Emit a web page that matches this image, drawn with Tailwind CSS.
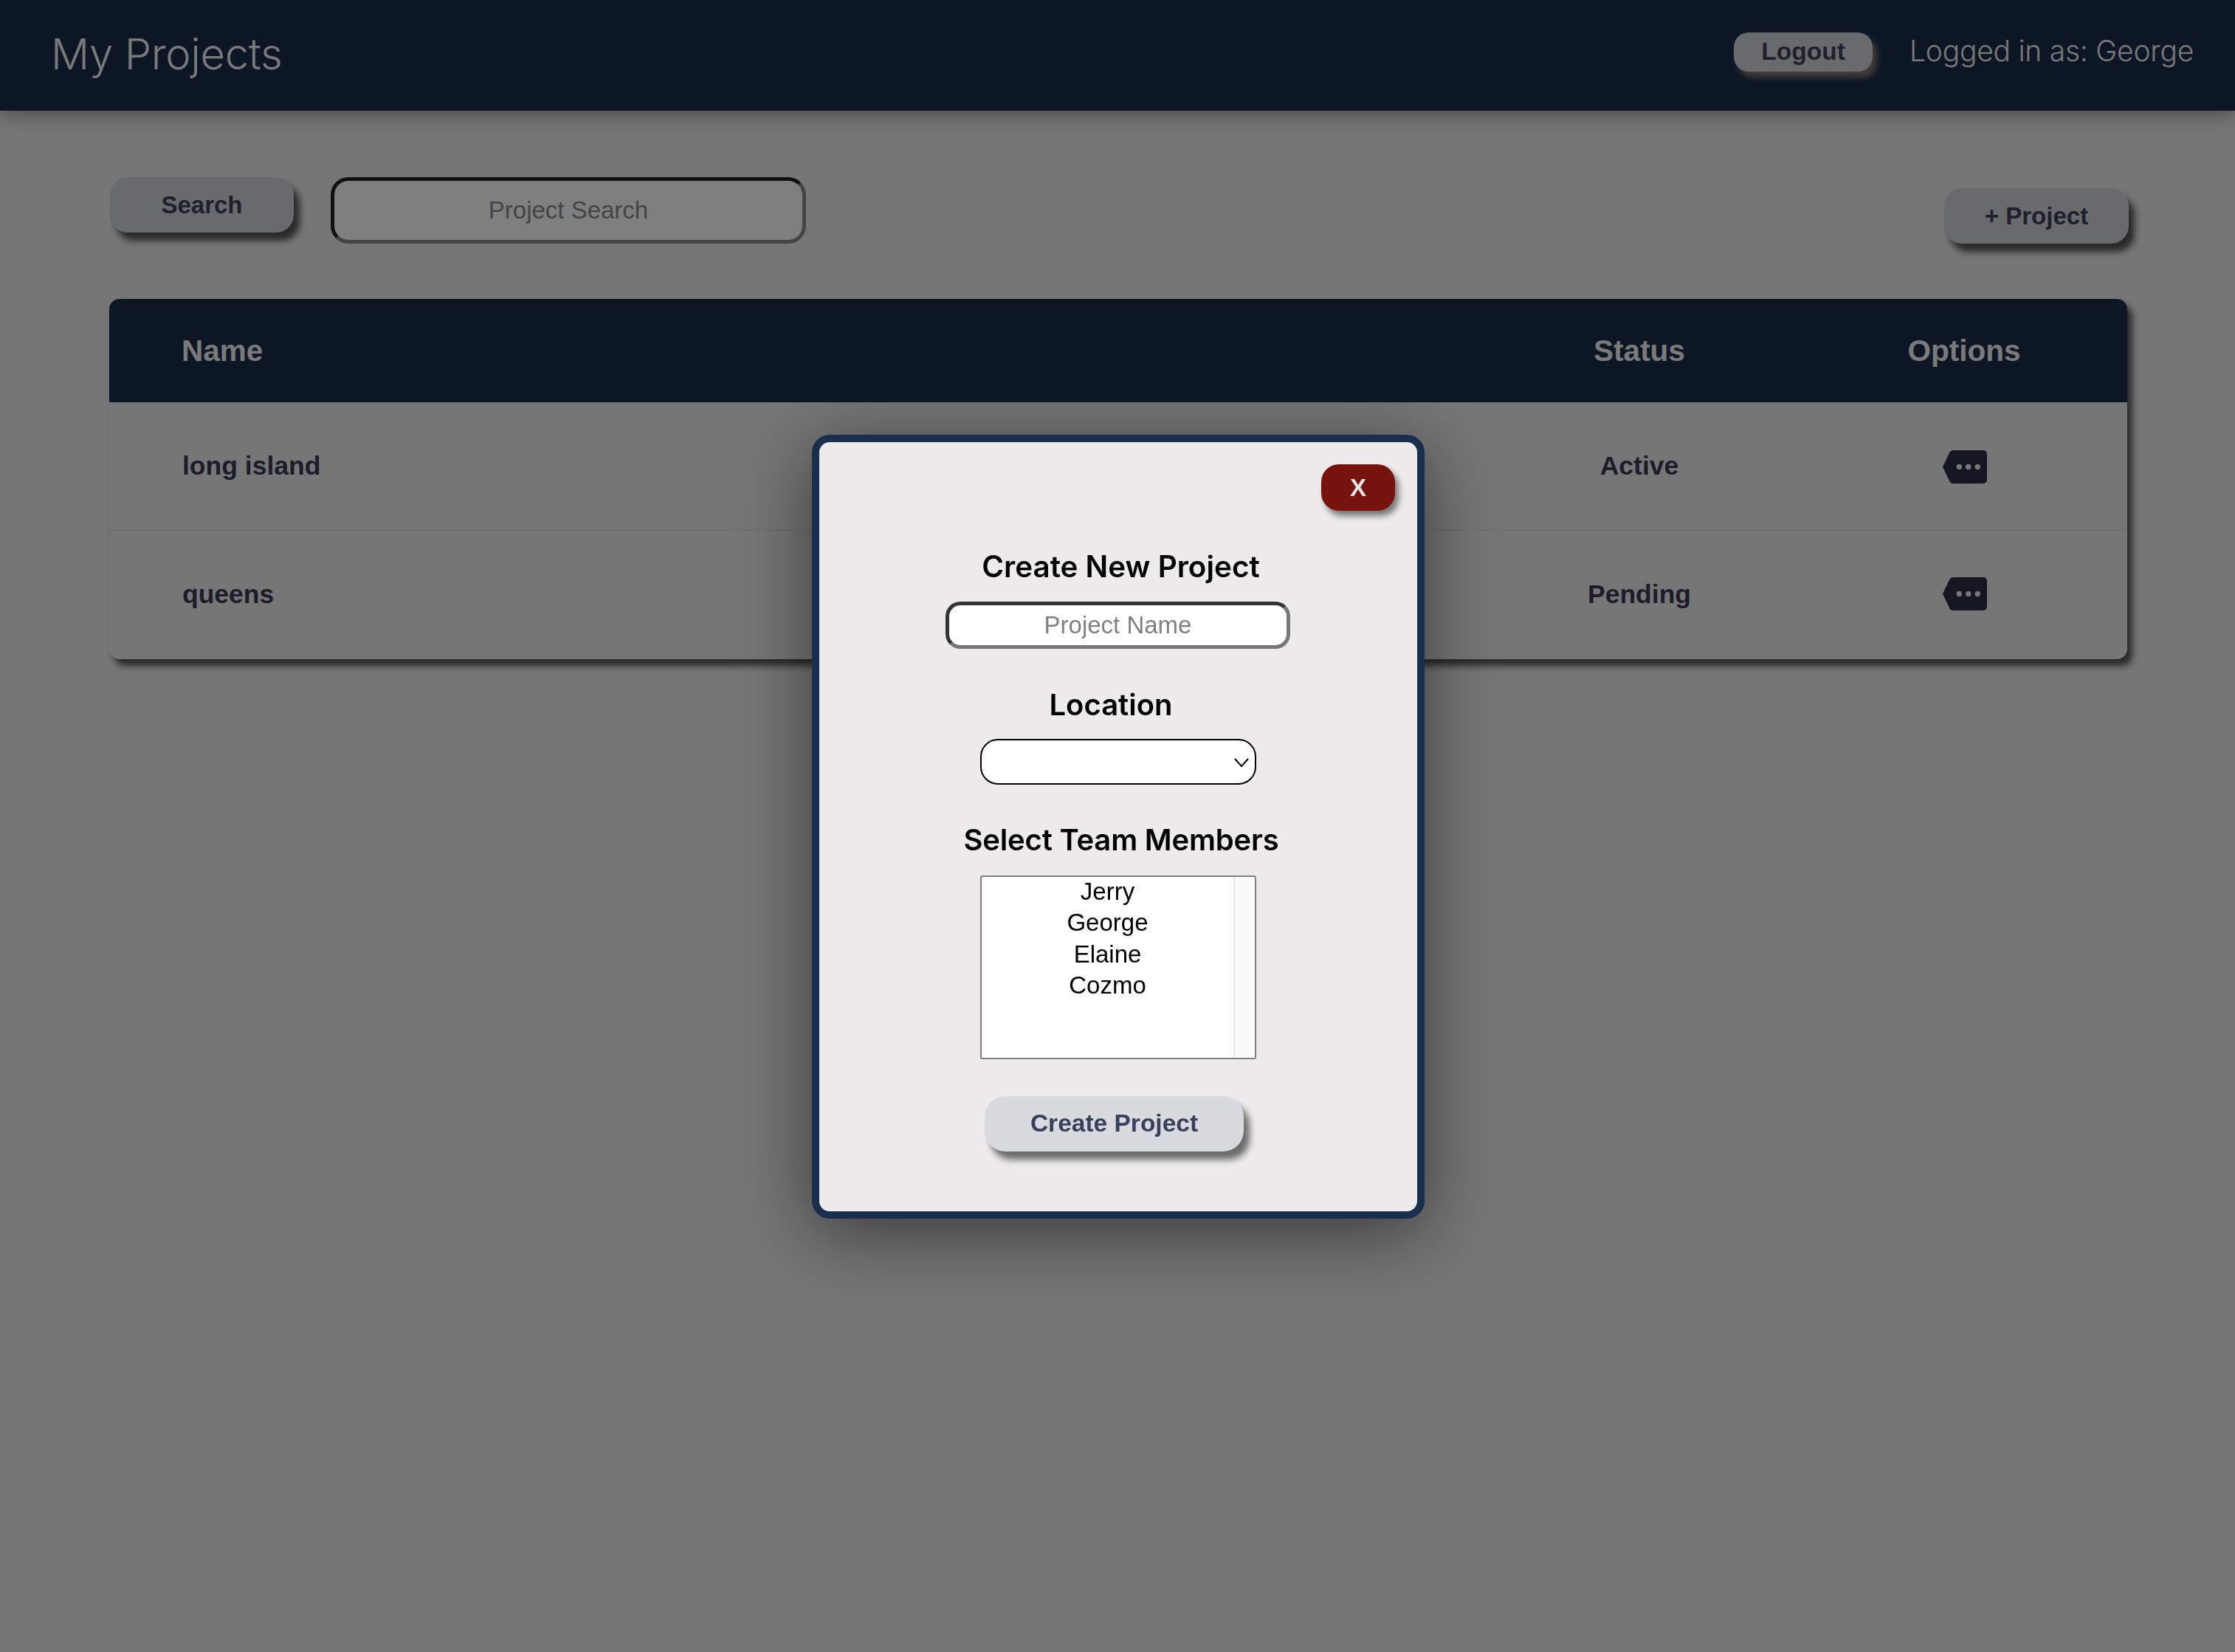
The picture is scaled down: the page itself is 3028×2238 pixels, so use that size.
<!DOCTYPE html>
<html lang="en">

<head>
    <meta charset="UTF-8">
    <meta name="viewport" content="width=device-width, initial-scale=1.0">
    <title>My Projects</title>
    <script src="https://cdn.jsdelivr.net/npm/@tailwindcss/browser@4"></script>
</head>

<body class="bg-[#ececec] min-h-screen font-['Liberation_Sans',Arial,sans-serif]">

    <header class="relative h-[150px] bg-[#182d4b] flex items-center justify-between pl-[69px] pr-[56px] shadow-[0_6px_24px_rgba(0,0,0,0.35)] font-['Inter',sans-serif] text-[#f2f2f2]">
        <h1 class="text-[58px] font-light tracking-[-0.4px] -mt-[4px]">My Projects</h1>
        <div class="flex items-center gap-[50px]">
            <button class="w-[188px] h-[53px] rounded-[20px] bg-[#d1d5dd] text-[#3e3e5a] text-[33.5px] font-bold font-['Liberation_Sans',sans-serif] shadow-[6px_8px_8px_rgba(160,140,120,0.8)] -mt-[9px]">Logout</button>
            <span class="text-[39px] font-light tracking-[-0.25px] -mt-[12px]">Logged in as: George</span>
        </div>
    </header>

    <main class="pt-[90px]">
        <!-- search + add -->
        <div class="flex justify-between pl-[149px] pr-[144px]">
            <div class="flex items-start gap-[50px]">
                <button class="w-[249px] h-[75px] rounded-[24px] bg-[#d1d5dd] text-[#3e3e5a] text-[33px] font-bold shadow-[8px_11px_10px_rgba(0,0,0,0.65)]">Search</button>
                <input type="text" placeholder="Project Search"
                    class="w-[644px] h-[90px] rounded-[24px] bg-white text-center text-[33px] border-[5px] border-t-[#222222] border-l-[#222222] border-b-[#888888] border-r-[#888888] placeholder:text-[#888888]">
            </div>
            <button class="self-end w-[250px] h-[75px] rounded-[24px] bg-[#d1d5dd] text-[#3e3e5a] text-[33px] font-bold shadow-[8px_11px_10px_rgba(0,0,0,0.65)]">+ Project</button>
        </div>

        <!-- projects table -->
        <div class="mt-[75px] ml-[148px] w-[2734px] rounded-[14px] shadow-[7px_9px_10px_rgba(0,0,0,0.65)] bg-[#ececec]">
            <div class="h-[140px] pt-[1px] rounded-t-[14px] bg-[#182d4b] text-[#f5f5f5] text-[40.5px] font-bold grid grid-cols-[1854px_438px_442px] items-center">
                <div class="pl-[98px]">Name</div>
                <div class="text-center">Status</div>
                <div class="text-center">Options</div>
            </div>
            <div class="h-[174px] pt-[2px] border-b-2 border-[#e2e2e2] text-[#383854] text-[35.5px] font-bold grid grid-cols-[1854px_438px_442px] items-center">
                <div class="pl-[99px]">long island</div>
                <div class="text-center">Active</div>
                <div class="flex justify-center">
                    <svg class="w-[60px] h-[45px] ml-[1px]" viewBox="0 0 60 45"><path d="M14 0H55a5 5 0 0 1 5 5V40a5 5 0 0 1-5 5H14Q11 45 9.500 42.500L0 22.500 9.500 2.500Q11 0 14 0Z" fill="#2c2c44"/><circle cx="22.300" cy="22.500" r="3.700" fill="#eeeeee"/><circle cx="34.700" cy="22.500" r="3.700" fill="#eeeeee"/><circle cx="47.300" cy="22.500" r="3.700" fill="#eeeeee"/></svg>
                </div>
            </div>
            <div class="h-[174px] text-[#383854] text-[35.5px] font-bold grid grid-cols-[1854px_438px_442px] items-center">
                <div class="pl-[99px]">queens</div>
                <div class="text-center -mt-[1px]">Pending</div>
                <div class="flex justify-center">
                    <svg class="w-[60px] h-[45px] ml-[1px] -mt-[3px]" viewBox="0 0 60 45"><path d="M14 0H55a5 5 0 0 1 5 5V40a5 5 0 0 1-5 5H14Q11 45 9.500 42.500L0 22.500 9.500 2.500Q11 0 14 0Z" fill="#2c2c44"/><circle cx="22.300" cy="22.500" r="3.700" fill="#eeeeee"/><circle cx="34.700" cy="22.500" r="3.700" fill="#eeeeee"/><circle cx="47.300" cy="22.500" r="3.700" fill="#eeeeee"/></svg>
                </div>
            </div>
        </div>
    </main>

    <!-- modal -->
    <div class="fixed inset-0 bg-black/50 flex justify-center items-start pt-[589px] pl-[2px]">
        <div class="w-[830px] h-[1062px] rounded-[24px] border-[10px] border-[#1a2f4d] bg-[#edebec] flex flex-col items-center text-black shadow-[0_20px_100px_rgba(0,0,0,0.5)]">
            <div class="self-end pt-[30px] pr-[30px]">
                <button class="w-[100px] h-[63px] rounded-[24px] bg-[#77130d] text-[#e4e4e4] text-[33px] font-bold shadow-[5px_7px_8px_rgba(0,0,0,0.5)]">X</button>
            </div>
            <h2 class="mt-[52px] ml-[7px] text-[40.4px] leading-[48px] font-semibold font-['Inter',sans-serif]">Create New Project</h2>
            <input type="text" placeholder="Project Name"
                class="mt-[23px] -ml-[1px] w-[467px] h-[64px] rounded-[20px] bg-white text-center text-[33px] border-[5px] border-t-[#333333] border-l-[#333333] border-b-[#777777] border-r-[#777777] placeholder:text-[#808080]">
            <h2 class="mt-[52px] -ml-[20px] text-[40px] leading-[48px] font-semibold font-['Inter',sans-serif]">Location</h2>
            <div class="relative mt-[22px] w-[374px] h-[62px]">
                <select class="w-full h-full appearance-none rounded-[24px] border-2 border-black bg-white"></select>
                <svg class="absolute right-[10px] top-[26px] w-[20px] h-[12px] pointer-events-none" viewBox="0 0 20 12"><path d="M1 1L10 11 19 1" fill="none" stroke="#000" stroke-width="2"/></svg>
            </div>
            <h2 class="mt-[51px] ml-[8px] text-[40px] leading-[48px] font-semibold tracking-[-0.2px] font-['Inter',sans-serif]">Select Team Members</h2>
            <div role="listbox" class="mt-[24px] w-[374px] h-[249px] rounded-[3px] border-2 border-[#808080] bg-white flex">
                <ul class="flex-1 text-center text-[33px] leading-[42.3px] -mt-[1px]">
                    <li>Jerry</li>
                    <li>George</li>
                    <li>Elaine</li>
                    <li>Cozmo</li>
                </ul>
                <div class="w-[29px] border-l-2 border-[#e8e8e8] bg-[#fafafa]"></div>
            </div>
            <button class="mt-[50px] -ml-[11px] w-[351px] h-[75px] rounded-[28px] bg-[#d9dae0] text-[#39415a] text-[33.5px] font-bold shadow-[8px_11px_10px_rgba(0,0,0,0.55)]">Create Project</button>
        </div>
    </div>

</body>

</html>
